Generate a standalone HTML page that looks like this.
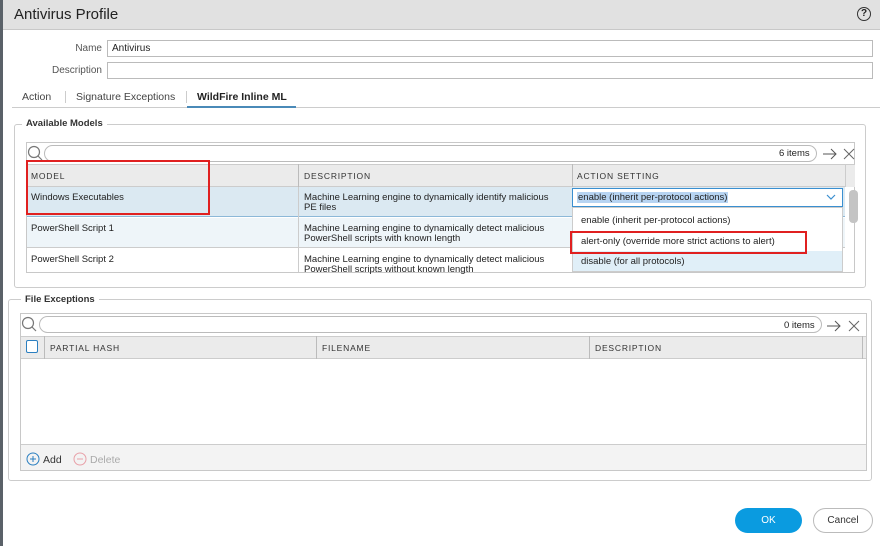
<!DOCTYPE html>
<html><head><style>
*{box-sizing:border-box;margin:0;padding:0}
body{width:880px;height:546px;background:#fff;font-family:"Liberation Sans",sans-serif;font-size:10px;color:#222;position:relative;overflow:hidden}
.a{position:absolute}
.inp{position:absolute;border:1px solid #bbb;background:#fff;height:18px;padding:3px 4px;font-size:10px}
.th{position:absolute;font-size:8.5px;letter-spacing:.8px;color:#333}
.cell{position:absolute;font-size:9.5px;line-height:10px}
</style></head><body>
<div class="a" style="left:0;top:0;width:3px;height:546px;background:#5a6168"></div>
<div class="a" style="left:3px;top:0;width:877px;height:30px;background:#e1e1e1;border-bottom:1px solid #c8c8c8"></div>
<div class="a" style="left:14px;top:6px;font-size:15px;color:#222">Antivirus Profile</div>
<div class="a" style="left:857px;top:7px;width:14px;height:14px;border:1.5px solid #333;border-radius:50%;font-size:10px;font-weight:bold;text-align:center;line-height:11px">?</div>

<div class="a" style="left:40px;top:43px;width:62px;text-align:right;color:#555">Name</div>
<div class="inp" style="left:107px;top:40px;width:766px;height:17px;padding-top:2px">Antivirus</div>
<div class="a" style="left:30px;top:65px;width:72px;text-align:right;color:#555">Description</div>
<div class="inp" style="left:107px;top:62px;width:766px;height:17px"></div>

<div class="a" style="left:22px;top:91px;font-size:10.5px;color:#444">Action</div>
<div class="a" style="left:65px;top:91px;width:1px;height:12px;background:#ccc"></div>
<div class="a" style="left:76px;top:91px;font-size:10.5px;color:#444">Signature Exceptions</div>
<div class="a" style="left:186px;top:91px;width:1px;height:12px;background:#ccc"></div>
<div class="a" style="left:197px;top:91px;font-size:10.5px;font-weight:bold;color:#222">WildFire Inline ML</div>
<div class="a" style="left:12px;top:107px;width:868px;height:1px;background:#ccc"></div>
<div class="a" style="left:187px;top:106px;width:109px;height:2px;background:#4a8ab8"></div>

<!-- Available Models -->
<div class="a" style="left:14px;top:124px;width:852px;height:164px;border:1px solid #ccc;border-radius:3px"></div>
<div class="a" style="left:22px;top:118px;background:#fff;padding:0 4px;font-weight:bold;font-size:9.5px;color:#333">Available Models</div>
<div class="a" style="left:26px;top:142px;width:829px;height:131px;border:1px solid #c8c8c8"></div>
<svg class="a" style="left:27px;top:145px" width="18" height="18"><circle cx="7" cy="7" r="5.5" fill="none" stroke="#777" stroke-width="1.2"/><line x1="11" y1="11" x2="15" y2="15" stroke="#777" stroke-width="1.2"/></svg>
<div class="a" style="left:44px;top:145px;width:773px;height:17px;border:1px solid #bbb;border-radius:9px"></div>
<div class="a" style="left:779px;top:148px;font-size:9.5px">6 items</div>
<svg class="a" style="left:822px;top:148px" width="16" height="12"><path d="M1 6h13M9 1l5 5-5 5" fill="none" stroke="#555" stroke-width="1"/></svg>
<svg class="a" style="left:843px;top:148px" width="12" height="12"><path d="M1 1l10 10M11 1L1 11" stroke="#666" stroke-width="1"/></svg>
<div class="a" style="left:27px;top:164px;width:818px;height:23px;background:#ebebeb;border-top:1px solid #ccc;border-bottom:1px solid #ccc"></div>
<div class="a" style="left:845px;top:164px;width:10px;height:23px;background:#ebebeb;border-top:1px solid #ccc;border-left:1px solid #ccc"></div>
<div class="a" style="left:298px;top:164px;width:1px;height:23px;background:#bbb"></div>
<div class="a" style="left:572px;top:164px;width:1px;height:23px;background:#bbb"></div>
<div class="th" style="left:31px;top:171px">MODEL</div>
<div class="th" style="left:304px;top:171px">DESCRIPTION</div>
<div class="th" style="left:577px;top:171px">ACTION SETTING</div>
<div class="a" style="left:27px;top:187px;width:818px;height:30px;background:#dbe9f2;border-bottom:1px solid #8cb8d8"></div>
<div class="a" style="left:27px;top:218px;width:818px;height:30px;background:#eef5f9;border-bottom:1px solid #ccc"></div>
<div class="a" style="left:298px;top:187px;width:1px;height:85px;background:#ccc"></div>
<div class="cell" style="left:31px;top:193px">Windows Executables</div>
<div class="cell" style="left:304px;top:193px">Machine Learning engine to dynamically identify malicious<br>PE files</div>
<div class="cell" style="left:31px;top:224px">PowerShell Script 1</div>
<div class="cell" style="left:304px;top:224px">Machine Learning engine to dynamically detect malicious<br>PowerShell scripts with known length</div>
<div class="cell" style="left:31px;top:255px">PowerShell Script 2</div>
<div class="cell" style="left:304px;top:255px">Machine Learning engine to dynamically detect malicious<br>PowerShell scripts without known length</div>
<div class="a" style="left:849px;top:190px;width:9px;height:33px;background:#c4c4c4;border-radius:4px"></div>
<div class="a" style="left:26px;top:160px;width:184px;height:55px;border:2px solid #e02020"></div>
<!-- select -->
<div class="a" style="left:572px;top:188px;width:271px;height:19px;border:1px solid #3a8fd0;background:#fff"></div>
<div class="a" style="left:577px;top:192px;background:#b7d4f2;font-size:9.5px;line-height:11px;padding:0 1px">enable (inherit per-protocol actions)</div>
<svg class="a" style="left:826px;top:194px" width="10" height="7"><polyline points="1,1 5,5 9,1" fill="none" stroke="#3a8fd0" stroke-width="1.2"/></svg>
<div class="a" style="left:572px;top:207px;width:271px;height:65px;border:1px solid #ccc;background:#fff"></div>
<div class="a" style="left:573px;top:251px;width:269px;height:20px;background:#e0eff8"></div>
<div class="cell" style="left:581px;top:216px">enable (inherit per-protocol actions)</div>
<div class="cell" style="left:581px;top:237px">alert-only (override more strict actions to alert)</div>
<div class="cell" style="left:581px;top:257px">disable (for all protocols)</div>
<div class="a" style="left:570px;top:231px;width:237px;height:23px;border:2px solid #e02020"></div>

<!-- File Exceptions -->
<div class="a" style="left:8px;top:299px;width:864px;height:182px;border:1px solid #ccc;border-radius:3px"></div>
<div class="a" style="left:21px;top:294px;background:#fff;padding:0 4px;font-weight:bold;font-size:9.5px;color:#333">File Exceptions</div>
<div class="a" style="left:20px;top:313px;width:847px;height:158px;border:1px solid #c8c8c8"></div>
<svg class="a" style="left:21px;top:316px" width="18" height="18"><circle cx="7" cy="7" r="5.5" fill="none" stroke="#777" stroke-width="1.2"/><line x1="11" y1="11" x2="15" y2="15" stroke="#777" stroke-width="1.2"/></svg>
<div class="a" style="left:39px;top:316px;width:783px;height:17px;border:1px solid #bbb;border-radius:9px"></div>
<div class="a" style="left:784px;top:320px;font-size:9.5px">0 items</div>
<svg class="a" style="left:826px;top:320px" width="16" height="12"><path d="M1 6h13M9 1l5 5-5 5" fill="none" stroke="#555" stroke-width="1"/></svg>
<svg class="a" style="left:848px;top:320px" width="12" height="12"><path d="M1 1l10 10M11 1L1 11" stroke="#666" stroke-width="1"/></svg>
<div class="a" style="left:21px;top:336px;width:845px;height:23px;background:#ebebeb;border-top:1px solid #ccc;border-bottom:1px solid #ccc"></div>
<div class="a" style="left:26px;top:340px;width:12px;height:13px;border:1.5px solid #2b7fc0;border-radius:2px;background:#fff"></div>
<div class="a" style="left:44px;top:336px;width:1px;height:23px;background:#bbb"></div>
<div class="a" style="left:316px;top:336px;width:1px;height:23px;background:#bbb"></div>
<div class="a" style="left:589px;top:336px;width:1px;height:23px;background:#bbb"></div>
<div class="a" style="left:862px;top:336px;width:1px;height:23px;background:#bbb"></div>
<div class="th" style="left:50px;top:343px">PARTIAL HASH</div>
<div class="th" style="left:322px;top:343px">FILENAME</div>
<div class="th" style="left:595px;top:343px">DESCRIPTION</div>
<div class="a" style="left:21px;top:444px;width:845px;height:26px;background:#f3f3f3;border-top:1px solid #ccc"></div>
<svg class="a" style="left:26px;top:452px" width="14" height="14"><circle cx="7" cy="7" r="6" fill="none" stroke="#2b7fc0"/><path d="M7 4v6M4 7h6" stroke="#2b7fc0"/></svg>
<div class="a" style="left:43px;top:454px;font-size:10.5px;color:#333">Add</div>
<svg class="a" style="left:73px;top:452px" width="14" height="14"><circle cx="7" cy="7" r="6" fill="none" stroke="#e8a0a8"/><path d="M4 7h6" stroke="#e8a0a8"/></svg>
<div class="a" style="left:90px;top:454px;font-size:10.5px;color:#aaa">Delete</div>

<div class="a" style="left:735px;top:508px;width:67px;height:25px;background:#0a9be0;border-radius:13px;color:#fff;text-align:center;line-height:25px;font-size:10px">OK</div>
<div class="a" style="left:813px;top:508px;width:60px;height:25px;border:1px solid #bbb;border-radius:13px;color:#333;text-align:center;line-height:23px;font-size:10px">Cancel</div>
</body></html>
